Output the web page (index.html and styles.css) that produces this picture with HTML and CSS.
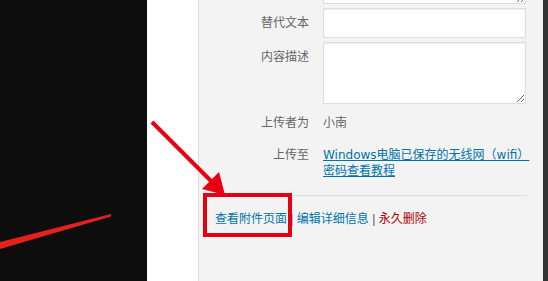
FILE: index.html
```html
<!DOCTYPE html>
<html lang="zh-CN">
<head>
<meta charset="utf-8">
<title>附件详情</title>
<link rel="stylesheet" href="styles.css">
</head>
<body>
<div class="frame">
  <div class="image-area">
    <svg class="streak" width="147" height="281" viewBox="0 0 147 281">
      <polygon points="0,242 111,214 111,216.5 0,249" fill="#e3231b"/>
    </svg>
  </div>
  <div class="white-gap"></div>
  <div class="panel">
    <div class="settings">
      <div class="setting caption-row">
        <span class="name"></span>
        <textarea class="field cap"></textarea>
      </div>
      <label class="setting">
        <span class="name pad">替代文本</span>
        <input class="field alt" type="text">
      </label>
      <label class="setting desc-row">
        <span class="name pad">内容描述</span>
        <textarea class="field desc"></textarea>
      </label>
      <div class="setting text-row uploader">
        <span class="name">上传者为</span>
        <span class="value">小南</span>
      </div>
      <div class="setting text-row uploaded">
        <span class="name">上传至</span>
        <a class="value link" href="#">Windows电脑已保存的无线网（wifi）密码查看教程</a>
      </div>
    </div>
    <div class="divider"></div>
    <div class="actions">
      <a class="action" href="#">查看附件页面</a><span class="sep"> | </span><a class="action" href="#">编辑详细信息</a><span class="sep"> | </span><a class="action delete" href="#">永久删除</a>
    </div>
  </div>
  <div class="scrollbar"></div>
</div>
<div class="highlight-box"></div>
<svg class="arrow" width="548" height="281" viewBox="0 0 548 281">
  <line x1="152" y1="122" x2="212" y2="182" stroke="#e60012" stroke-width="4"/>
  <polygon points="225,195 202,189 219,172" fill="#e60012"/>
</svg>
</body>
</html>
```

FILE: styles.css
```css
* { box-sizing: border-box; }

html, body {
  margin: 0;
  padding: 0;
  width: 548px;
  height: 281px;
  overflow: hidden;
  background: #f3f3f3;
}

body {
  position: relative;
  font-family: "DejaVu Sans", "Noto Sans CJK SC", sans-serif;
  font-size: 12px;
  line-height: 16px;
  color: #666;
}

.frame {
  display: flex;
  height: 281px;
}

.image-area {
  width: 147px;
  flex: none;
  background: #0d0d0d;
}

.streak { display: block; }

.white-gap {
  width: 51px;
  flex: none;
  background: #fff;
}

.panel {
  width: 345px;
  flex: none;
  background: #f3f3f3;
  border-left: 1px solid #dcdcdc;
  overflow: hidden;
}

.settings {
  display: flex;
  flex-direction: column;
}

.setting {
  display: flex;
  column-gap: 14px;
  margin-top: 4px;
}

.name {
  width: 110px;
  flex: none;
  text-align: right;
  color: #666;
}

.name.pad { padding-top: 7px; }

.field {
  display: block;
  width: 203px;
  margin: 0;
  padding: 2px 4px;
  border: 1px solid #ddd;
  background: #fff;
  box-shadow: inset 0 1px 2px rgba(0, 0, 0, 0.07);
  font: inherit;
  color: #333;
  outline: none;
}

textarea.field { resize: vertical; }

.caption-row { margin-top: -36px; }
.cap { height: 40px; }
.alt { height: 30px; }
.desc { height: 62px; }

.text-row .value {
  width: 212px;
  flex: none;
}

.uploader { margin-top: 11px; }
.uploaded { margin-top: 16px; }

.link {
  color: #0073aa;
  text-decoration: underline;
}

.divider {
  margin: 16px 16px 0 4px;
  border-top: 1px solid #dddddd;
}

.actions {
  margin-top: 15px;
  padding-left: 16px;
  white-space: nowrap;
}

.action {
  color: #0073aa;
  text-decoration: none;
}

.action.delete { color: #a00; }

.sep {
  color: #555;
  font-family: "Liberation Sans", sans-serif;
}

.scrollbar {
  width: 5px;
  flex: none;
  background: #333;
}

.highlight-box {
  position: absolute;
  left: 203px;
  top: 193px;
  width: 89px;
  height: 44px;
  border: 4px solid #e60012;
}

.arrow {
  position: absolute;
  left: 0;
  top: 0;
  pointer-events: none;
}
```
